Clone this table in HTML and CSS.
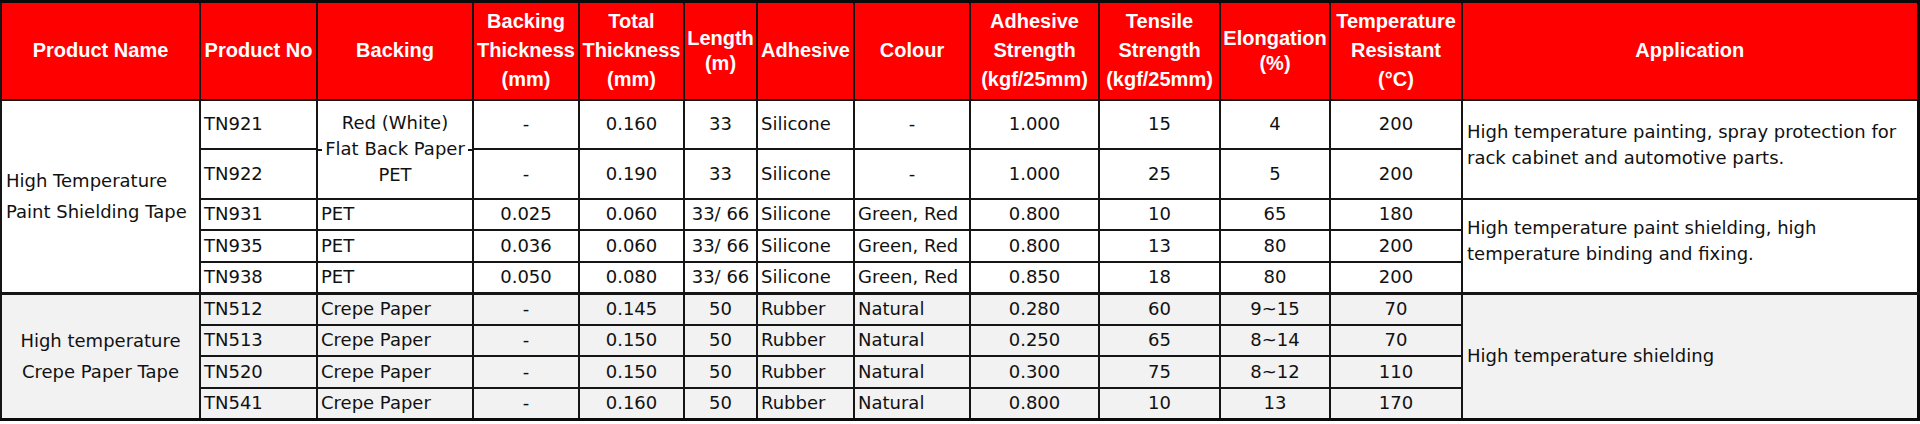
FILE: index.html
```html
<!DOCTYPE html>
<html lang="en">
<head>
<meta charset="utf-8">
<title>High Temperature Tape Specifications</title>
<link rel="stylesheet" href="styles.css">
</head>
<body>
<table class="spec">
  <colgroup>
    <col class="c-name"><col class="c-no"><col class="c-backing"><col class="c-bthick"><col class="c-tthick"><col class="c-length"><col class="c-adh"><col class="c-colour"><col class="c-astr"><col class="c-tstr"><col class="c-elong"><col class="c-temp"><col class="c-app">
  </colgroup>
  <thead>
    <tr class="r-head">
      <th>Product Name</th>
      <th>Product No</th>
      <th>Backing</th>
      <th>Backing<br>Thickness<br>(mm)</th>
      <th>Total<br>Thickness<br>(mm)</th>
      <th class="two">Length<br>(m)</th>
      <th>Adhesive</th>
      <th>Colour</th>
      <th>Adhesive<br>Strength<br>(kgf/25mm)</th>
      <th>Tensile<br>Strength<br>(kgf/25mm)</th>
      <th class="two">Elongation<br>(%)</th>
      <th>Temperature<br>Resistant<br>(°C)</th>
      <th>Application</th>
    </tr>
  </thead>
  <tbody>
    <tr class="r-tall">
      <td rowspan="5" class="pname left">High Temperature<br>Paint Shielding Tape</td>
      <td class="left">TN921</td>
      <td rowspan="2" class="merged"><span class="ml">Red (White)</span><span class="ml mid">Flat Back Paper</span><span class="ml">PET</span></td>
      <td>-</td><td>0.160</td><td>33</td><td class="left">Silicone</td><td>-</td><td>1.000</td><td>15</td><td>4</td><td>200</td>
      <td rowspan="2" class="app app2">High temperature painting, spray protection for<br>rack cabinet and automotive parts.</td>
    </tr>
    <tr class="r-tall">
      <td class="left">TN922</td>
      <td>-</td><td>0.190</td><td>33</td><td class="left">Silicone</td><td>-</td><td>1.000</td><td>25</td><td>5</td><td>200</td>
    </tr>
    <tr class="r-short">
      <td class="left">TN931</td><td class="left">PET</td>
      <td>0.025</td><td>0.060</td><td>33/ 66</td><td class="left">Silicone</td><td class="left">Green, Red</td><td>0.800</td><td>10</td><td>65</td><td>180</td>
      <td rowspan="3" class="app app2">High temperature paint shielding, high<br>temperature binding and fixing.</td>
    </tr>
    <tr class="r-short">
      <td class="left">TN935</td><td class="left">PET</td>
      <td>0.036</td><td>0.060</td><td>33/ 66</td><td class="left">Silicone</td><td class="left">Green, Red</td><td>0.800</td><td>13</td><td>80</td><td>200</td>
    </tr>
    <tr class="r-short">
      <td class="left">TN938</td><td class="left">PET</td>
      <td>0.050</td><td>0.080</td><td>33/ 66</td><td class="left">Silicone</td><td class="left">Green, Red</td><td>0.850</td><td>18</td><td>80</td><td>200</td>
    </tr>
    <tr class="r-short grey group-start">
      <td rowspan="4" class="pname">High temperature<br>Crepe Paper Tape</td>
      <td class="left">TN512</td><td class="left">Crepe Paper</td>
      <td>-</td><td>0.145</td><td>50</td><td class="left">Rubber</td><td class="left">Natural</td><td>0.280</td><td>60</td><td>9~15</td><td>70</td>
      <td rowspan="4" class="app">High temperature shielding</td>
    </tr>
    <tr class="r-short grey">
      <td class="left">TN513</td><td class="left">Crepe Paper</td>
      <td>-</td><td>0.150</td><td>50</td><td class="left">Rubber</td><td class="left">Natural</td><td>0.250</td><td>65</td><td>8~14</td><td>70</td>
    </tr>
    <tr class="r-short grey">
      <td class="left">TN520</td><td class="left">Crepe Paper</td>
      <td>-</td><td>0.150</td><td>50</td><td class="left">Rubber</td><td class="left">Natural</td><td>0.300</td><td>75</td><td>8~12</td><td>110</td>
    </tr>
    <tr class="r-short grey">
      <td class="left">TN541</td><td class="left">Crepe Paper</td>
      <td>-</td><td>0.160</td><td>50</td><td class="left">Rubber</td><td class="left">Natural</td><td>0.800</td><td>10</td><td>13</td><td>170</td>
    </tr>
  </tbody>
</table>
</body>
</html>
```
FILE: styles.css
```css
html, body {
  margin: 0;
  padding: 0;
  background: #ffffff;
}

body {
  width: 1920px;
  height: 424px;
  overflow: hidden;
}

.spec {
  border-collapse: collapse;
  table-layout: fixed;
  width: 1919px;
  border: 3px solid #0a0a0a;
  border-left-width: 2px;
  font-family: "DejaVu Sans", "Liberation Sans", sans-serif;
  font-size: 18px;
  color: #111111;
}

.c-name { width: 199px; }
.c-no { width: 117px; }
.c-backing { width: 156px; }
.c-bthick { width: 106px; }
.c-tthick { width: 105px; }
.c-length { width: 73px; }
.c-adh { width: 97px; }
.c-colour { width: 116px; }
.c-astr { width: 129px; }
.c-tstr { width: 121px; }
.c-elong { width: 110px; }
.c-temp { width: 132px; }
.c-app { width: 456px; }

.spec th,
.spec td {
  border: 2px solid #151515;
  padding: 0 3px;
  vertical-align: middle;
  text-align: center;
  white-space: nowrap;
  overflow: hidden;
}

.spec th {
  background: #ff0000;
  color: #ffffff;
  font-family: "Liberation Sans", Arial, sans-serif;
  font-weight: 700;
  font-size: 20px;
  line-height: 29px;
  padding: 0 1px;
}

.spec th.two {
  line-height: 25px;
}

.r-head { height: 98px; }
.r-tall { height: 49.5px; }
.r-short { height: 31.5px; }

.spec td {
  line-height: 26px;
}

.spec td.left {
  text-align: left;
}

.spec td.pname {
  line-height: 31px;
}

.spec td.pname.left {
  padding-left: 4px;
}

.grey td {
  background: #f2f2f2;
}

.group-start td {
  border-top-width: 3px;
}

.spec td.merged {
  padding: 0;
  background:
    linear-gradient(to bottom,
      transparent calc(50% - 1px),
      #151515 calc(50% - 1px),
      #151515 calc(50% + 1px),
      transparent calc(50% + 1px));
}

.ml {
  display: block;
}

.ml.mid {
  background: #ffffff;
  margin: 0 4px;
}

.spec td.app {
  text-align: left;
  padding-left: 4px;
}

.spec td.app2 {
  padding-bottom: 9px;
}
```
